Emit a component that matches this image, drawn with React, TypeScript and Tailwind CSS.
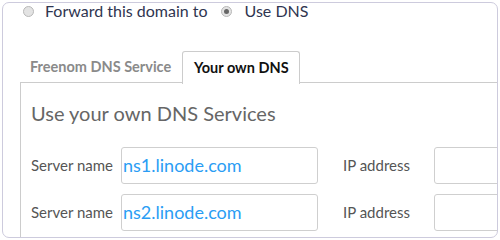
import React from 'react';

function Radio({ checked }: { checked?: boolean }) {
    return (
        <span className="w-[11px] h-[11px] rounded-full border border-[#b8b8b8] bg-[#e3e3e3] flex items-center justify-center shrink-0">
            {checked && <span className="w-[5px] h-[5px] rounded-full bg-[#666]" />}
        </span>
    );
}

function ServerRow({ value }: { value: string }) {
    return (
        <div className="flex items-center">
            <span className="w-[90px] shrink-0 text-[15px] text-[#555]">Server name</span>
            <div className="w-[197px] h-[37px] shrink-0 border border-[#cfcfcf] rounded-[3px] flex items-center pl-[1px] text-[18px] text-[#2a9df4]">
                {value}
            </div>
            <span className="ml-[25px] w-[91px] shrink-0 text-[15px] text-[#555]">IP address</span>
            <div className="w-[200px] h-[37px] shrink-0 border border-[#cfcfcf] rounded-[3px]" />
        </div>
    );
}

export default function App() {
    return (
        <div className="w-[500px] h-[240px] bg-white pt-[2px] pl-[2px]" style={{ fontFamily: 'Lato, sans-serif' }}>
            <div className="w-[496px] h-[236px] border border-[#cdcbdd] rounded-[7px] bg-white flex flex-col">
                {/* Forward / DNS choice */}
                <div className="-mt-[2px] h-[20px] pl-[20px] flex items-center text-[16px] leading-[20px] text-[#2f3550]">
                    <Radio />
                    <span className="ml-[11px]">Forward this domain to</span>
                    <span className="ml-[13px]"><Radio checked /></span>
                    <span className="ml-[13px]">Use DNS</span>
                </div>

                <div className="ml-[17px] mt-[30px] flex-1 overflow-hidden rounded-br-[6px]">
                    <div className="flex flex-col w-[520px]">
                        {/* Tabs */}
                        <div className="flex items-start h-[32px] border-b border-[#cccccc]">
                            <div className="w-[162px] h-[32px] pt-[7px] pl-[10px] text-[14.5px] leading-[17px] font-bold text-[#8a8a8a]">
                                Freenom DNS Service
                            </div>
                            <div className="w-[118px] h-[33px] pt-[7px] pl-[11px] border-x border-t border-[#cccccc] rounded-t-[3px] bg-white text-[14.5px] leading-[17px] font-bold text-[#111]">
                                Your own DNS
                            </div>
                        </div>

                        {/* Panel */}
                        <div className="border-l border-[#cccccc] pt-[18px] pl-[10px] h-[200px]">
                            <h2 className="text-[20px] leading-[24px] text-[#666] mb-[22px]">Use your own DNS Services</h2>
                            <div className="flex flex-col gap-[10px]">
                                <ServerRow value="ns1.linode.com" />
                                <ServerRow value="ns2.linode.com" />
                            </div>
                        </div>
                    </div>
                </div>
            </div>
        </div>
    );
}
